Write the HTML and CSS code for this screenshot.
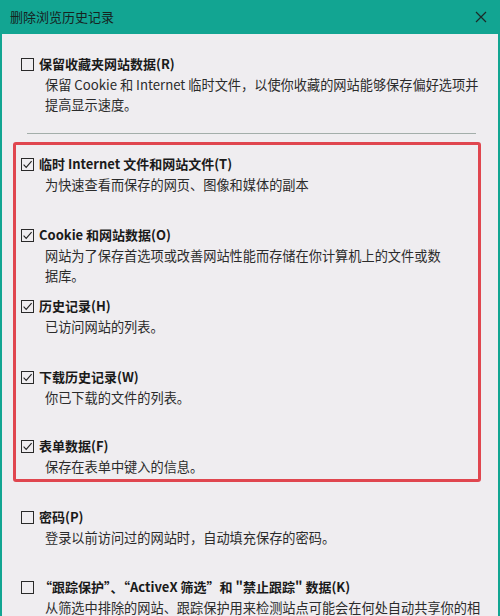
FILE: index.html
```html
<!DOCTYPE html>
<html lang="zh-CN">
<head>
<meta charset="utf-8">
<title>删除浏览历史记录</title>
<link rel="stylesheet" href="styles.css">
</head>
<body>
<div class="window">
  <div class="titlebar">
    <span class="title">删除浏览历史记录</span>
    <svg class="close" width="12" height="12" viewBox="0 0 12 12"><path d="M1 1 L11 11 M11 1 L1 11" stroke="#1c2a27" stroke-width="1.2" fill="none"/></svg>
  </div>
  <div class="content">
    <div class="item first">
      <div class="label"><span class="cb"></span>保留收藏夹网站数据(R)</div>
      <div class="desc">保留 Cookie 和 Internet 临时文件，以使你收藏的网站能够保存偏好选项并<br>提高显示速度。</div>
    </div>
    <div class="sep"></div>
    <div class="highlight">
      <div class="item">
        <div class="label"><span class="cb checked"><svg width="13" height="13" viewBox="0 0 13 13"><path d="M2.6 6.6 L5.2 9.4 L10.6 3.2" stroke="#222" stroke-width="1.1" fill="none"/></svg></span>临时 Internet 文件和网站文件(T)</div>
        <div class="desc">为快速查看而保存的网页、图像和媒体的副本</div>
      </div>
      <div class="item">
        <div class="label"><span class="cb checked"><svg width="13" height="13" viewBox="0 0 13 13"><path d="M2.6 6.6 L5.2 9.4 L10.6 3.2" stroke="#222" stroke-width="1.1" fill="none"/></svg></span>Cookie 和网站数据(O)</div>
        <div class="desc">网站为了保存首选项或改善网站性能而存储在你计算机上的文件或数<br>据库。</div>
      </div>
      <div class="item">
        <div class="label"><span class="cb checked"><svg width="13" height="13" viewBox="0 0 13 13"><path d="M2.6 6.6 L5.2 9.4 L10.6 3.2" stroke="#222" stroke-width="1.1" fill="none"/></svg></span>历史记录(H)</div>
        <div class="desc">已访问网站的列表。</div>
      </div>
      <div class="item">
        <div class="label"><span class="cb checked"><svg width="13" height="13" viewBox="0 0 13 13"><path d="M2.6 6.6 L5.2 9.4 L10.6 3.2" stroke="#222" stroke-width="1.1" fill="none"/></svg></span>下载历史记录(W)</div>
        <div class="desc">你已下载的文件的列表。</div>
      </div>
      <div class="item last">
        <div class="label"><span class="cb checked"><svg width="13" height="13" viewBox="0 0 13 13"><path d="M2.6 6.6 L5.2 9.4 L10.6 3.2" stroke="#222" stroke-width="1.1" fill="none"/></svg></span>表单数据(F)</div>
        <div class="desc">保存在表单中键入的信息。</div>
      </div>
    </div>
    <div class="item after">
      <div class="label"><span class="cb"></span>密码(P)</div>
      <div class="desc">登录以前访问过的网站时，自动填充保存的密码。</div>
    </div>
    <div class="item">
      <div class="label"><span class="cb"></span>“跟踪保护”、“ActiveX 筛选”和 "禁止跟踪" 数据(K)</div>
      <div class="desc">从筛选中排除的网站、跟踪保护用来检测站点可能会在何处自动共享你的相</div>
    </div>
  </div>
</div>
</body>
</html>
```

FILE: styles.css
```css
html, body {
  margin: 0;
  padding: 0;
  width: 500px;
  height: 616px;
  overflow: hidden;
  background: #efedf0;
}

.window {
  height: 616px;
  border-left: 2px solid #12a592;
  border-right: 2px solid #12a592;
  background: #efedf0;
  font-family: "Noto Sans CJK SC", "Noto Sans", sans-serif;
  color: #222;
  overflow: hidden;
}

.titlebar {
  height: 34px;
  background: #12a592;
  display: flex;
  align-items: center;
  justify-content: space-between;
  padding: 0 10px 0 8px;
}

.title {
  font-size: 13px;
  color: #16231f;
  line-height: 20px;
}

.close {
  display: block;
  margin-right: 1px;
}

.content {
  padding: 20px 0 0 19px;
}

.item {
  min-height: 71px;
}

.item.first,
.item.last {
  min-height: 0;
}

.item.last {
  margin-top: -2px;
}

.item.after {
  margin-top: 25px;
  min-height: 70px;
}

.label {
  display: flex;
  align-items: center;
  font-size: 13px;
  font-weight: bold;
  line-height: 20px;
  color: #1a1a1a;
  white-space: nowrap;
}

.cb {
  width: 13px;
  height: 13px;
  box-sizing: border-box;
  border: 1px solid #2a2a2a;
  margin-right: 5px;
  position: relative;
  flex: none;
}

.cb svg {
  position: absolute;
  left: -1px;
  top: -1px;
}

.desc {
  margin-top: 1px;
  padding-left: 24px;
  font-size: 13.2px;
  line-height: 20px;
  color: #2b2b2b;
  white-space: nowrap;
}

.sep {
  height: 1px;
  background: #a3aeaa;
  margin: 18px 22px 0 6px;
}

.highlight {
  margin: 8px 17px 0 -8px;
  border: 3px solid #e0464f;
  border-radius: 3px;
  padding: 9px 0 2px 5px;
}
```
